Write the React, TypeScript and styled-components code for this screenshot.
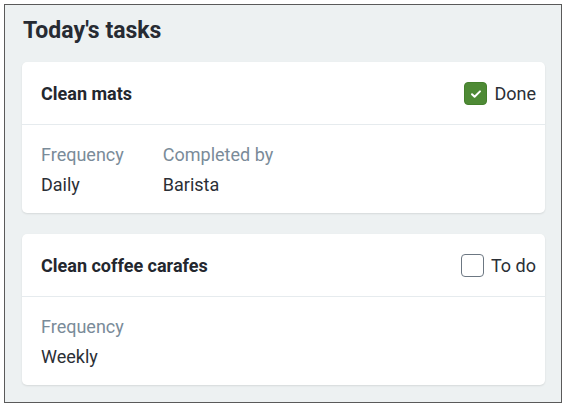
import React from "react";
import styled, { createGlobalStyle } from "styled-components";

const Global = createGlobalStyle`
  html, body { margin: 0; padding: 0; background: #ffffff; }
  body { font-family: Roboto, "Liberation Sans", sans-serif; }
  * { box-sizing: border-box; }
`;

const Frame = styled.div`
  margin: 4px 0 0 4px;
  width: 558px;
  height: 399px;
  border: 1.5px solid #5a5a5a;
  background: #edf1f2;
  padding: 14px 16px 0 17px;
  display: flex;
  flex-direction: column;
`;

const Title = styled.h1`
  margin: 0 0 19px 1px;
  font-size: 23px;
  line-height: 24px;
  font-weight: 700;
  color: #272b33;
`;

const List = styled.div`
  display: flex;
  flex-direction: column;
  gap: 21px;
`;

const Card = styled.div`
  background: #ffffff;
  border-radius: 5px;
  box-shadow: 0 1px 2px rgba(0, 0, 0, 0.1);
`;

const CardHeader = styled.div`
  height: 63px;
  display: flex;
  align-items: center;
  justify-content: space-between;
  padding: 1px 9px 0 19px;
  border-bottom: 1.5px solid #e6ebee;
`;

const TaskName = styled.div`
  font-size: 18px;
  font-weight: 700;
  color: #23272e;
`;

const Status = styled.label`
  display: flex;
  align-items: center;
  gap: 7px;
  font-size: 18px;
  color: #2b2f36;
`;

const Box = styled.span<{ $checked: boolean }>`
  width: 23px;
  height: 23px;
  border-radius: 4px;
  display: flex;
  align-items: center;
  justify-content: center;
  background: ${(p) => (p.$checked ? "#4e8a35" : "#ffffff")};
  border: 1.5px solid ${(p) => (p.$checked ? "#44802c" : "#6c7782")};
`;

const CardBody = styled.div`
  display: flex;
  gap: 39px;
  padding: 19px 19px 17px;
`;

const Field = styled.div`
  display: flex;
  flex-direction: column;
  gap: 8px;
`;

const Label = styled.div`
  font-size: 18px;
  line-height: 22px;
  color: #7a8b99;
`;

const Value = styled.div`
  font-size: 18px;
  line-height: 22px;
  color: #2b2f36;
`;

type Task = {
  name: string;
  done: boolean;
  fields: { label: string; value: string }[];
};

const tasks: Task[] = [
  {
    name: "Clean mats",
    done: true,
    fields: [
      { label: "Frequency", value: "Daily" },
      { label: "Completed by", value: "Barista" },
    ],
  },
  {
    name: "Clean coffee carafes",
    done: false,
    fields: [{ label: "Frequency", value: "Weekly" }],
  },
];

export default function App() {
  return (
    <>
      <Global />
      <Frame>
        <Title>Today's tasks</Title>
        <List>
          {tasks.map((t) => (
            <Card key={t.name}>
              <CardHeader>
                <TaskName>{t.name}</TaskName>
                <Status>
                  <Box $checked={t.done}>
                    {t.done && (
                      <svg width="14" height="14" viewBox="0 0 14 14">
                        <path
                          d="M3 7.2l2.6 2.6L11 4.4"
                          fill="none"
                          stroke="#ffffff"
                          strokeWidth="2"
                          strokeLinecap="round"
                          strokeLinejoin="round"
                        />
                      </svg>
                    )}
                  </Box>
                  {t.done ? "Done" : "To do"}
                </Status>
              </CardHeader>
              <CardBody>
                {t.fields.map((f) => (
                  <Field key={f.label}>
                    <Label>{f.label}</Label>
                    <Value>{f.value}</Value>
                  </Field>
                ))}
              </CardBody>
            </Card>
          ))}
        </List>
      </Frame>
    </>
  );
}
